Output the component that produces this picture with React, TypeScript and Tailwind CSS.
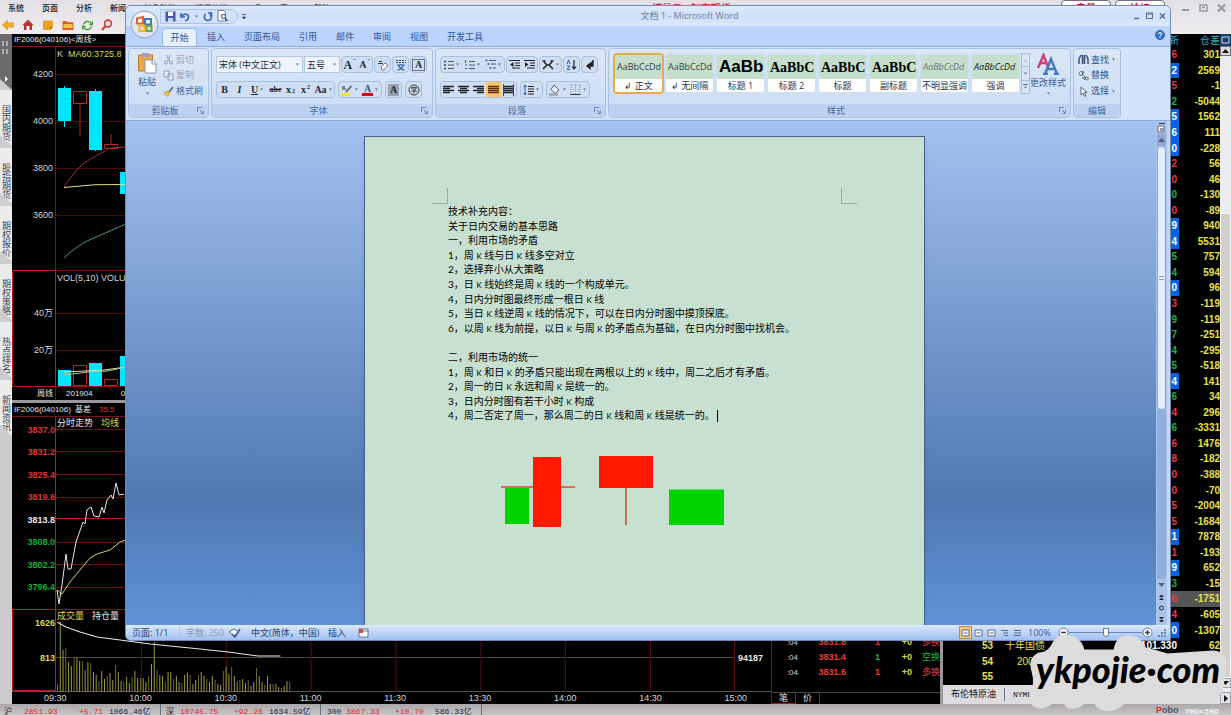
import type { ReactNode } from 'react';
import { FiRefreshCw } from 'react-icons/fi';

// --- Data ---
const menus = ['系统', '页面', '分析', '新闻'];
const sideTabs = ['国内期货', '股指期货', '期权报价', '期权策略', '热点排名', '新闻资讯'];
const weeklyAxis = ['4200', '4000', '3800', '3600'];
const times = ['09:30', '10:00', '10:30', '11:00', '11:30', '13:30', '14:00', '14:30', '15:00'];

const intradayAxis = [
  { value: '3837.0', color: 'text-[#e03030]' },
  { value: '3831.2', color: 'text-[#e03030]' },
  { value: '3825.4', color: 'text-[#e03030]' },
  { value: '3819.6', color: 'text-[#e03030]' },
  { value: '3813.8', color: 'text-gray-200' },
  { value: '3808.0', color: 'text-[#10b030]' },
  { value: '3802.2', color: 'text-[#10b030]' },
  { value: '3796.4', color: 'text-[#10b030]' },
];

const volumeBars = [
  8, 70, 42, 44, 30, 26, 34, 34, 31, 31, 22, 30, 29, 20, 17, 11, 21, 13, 16, 19, 12, 27, 20, 11, 10,
  15, 9, 15, 21, 14, 14, 14, 10, 16, 28, 50, 22, 17, 16, 10, 20, 20, 13, 16, 10, 9, 17, 19, 17, 8,
  12, 17, 20, 16, 13, 10, 16, 12, 8, 7, 21, 25, 18, 25, 16, 10, 12, 13, 9, 12, 6, 10, 24, 16, 10, 7,
  16, 8, 8, 8, 5, 4, 6, 11, 10,
];

// last digit, tone (r = up, g = down, b = flashing), position change
const quotes: [string, string, string][] = [
  ['6', 'r', '301'], ['2', 'b', '2569'], ['5', 'r', '-1'], ['2', 'g', '-5044'], ['5', 'b', '1562'],
  ['6', 'b', '111'], ['0', 'b', '-228'], ['2', 'r', '56'], ['0', 'r', '46'], ['0', 'g', '-130'],
  ['0', 'r', '-89'], ['9', 'b', '940'], ['4', 'b', '5531'], ['5', 'g', '757'], ['4', 'g', '594'],
  ['0', 'b', '96'], ['3', 'r', '-119'], ['9', 'g', '-119'], ['7', 'g', '-251'], ['4', 'g', '-295'],
  ['5', 'g', '-518'], ['4', 'b', '141'], ['6', 'g', '34'], ['4', 'r', '296'], ['6', 'g', '-3331'],
  ['6', 'r', '1476'], ['8', 'r', '-182'], ['0', 'r', '-388'], ['0', 'r', '-70'], ['5', 'r', '-2004'],
  ['5', 'r', '-1684'], ['1', 'b', '7878'], ['1', 'r', '-193'], ['9', 'b', '652'], ['3', 'g', '-15'],
  ['6', 'r', '-1751'], ['4', 'r', '-605'], ['0', 'b', '-1307'],
];

const tone: Record<string, string> = {
  r: 'text-[#e83c3c]',
  g: 'text-[#20b040]',
  b: 'bg-[#0a62e0] text-white',
};

const ribbonTabs = ['插入', '页面布局', '引用', '邮件', '审阅', '视图', '开发工具'];

const docStyles = [
  { name: '↲ 正文', sample: 'AaBbCcDd', cls: 'text-[9px] text-gray-700' },
  { name: '↲ 无间隔', sample: 'AaBbCcDd', cls: 'text-[9px] text-gray-700' },
  { name: '标题 1', sample: 'AaBb', cls: "font-['Liberation_Sans'] text-[17px] font-bold text-black" },
  { name: '标题 2', sample: 'AaBbC', cls: "font-['Liberation_Serif'] text-[14px] font-bold text-black" },
  { name: '标题', sample: 'AaBbC', cls: "font-['Liberation_Serif'] text-[14px] font-bold text-black" },
  { name: '副标题', sample: 'AaBbC', cls: "font-['Liberation_Serif'] text-[14px] font-bold text-black" },
  { name: '不明显强调', sample: 'AaBbCcDd', cls: 'text-[9px] italic text-gray-500' },
  { name: '强调', sample: 'AaBbCcDd', cls: 'text-[9px] italic text-gray-900' },
];

const docLines = [
  '技术补充内容：',
  '关于日内交易的基本思路',
  '一，利用市场的矛盾',
  '1，周 K 线与日 K 线多空对立',
  '2，选择弃小从大策略',
  '3，日 K 线始终是周 K 线的一个构成单元。',
  '4，日内分时图最终形成一根日 K 线',
  '5，当日 K 线逆周 K 线的情况下，可以在日内分时图中摸顶探底。',
  '6，以周 K 线为前提，以日 K 与周 K 的矛盾点为基础，在日内分时图中找机会。',
  '',
  '二，利用市场的统一',
  '1，周 K 和日 K 的矛盾只能出现在两根以上的 K 线中，周二之后才有矛盾。',
  '2，周一的日 K 永远和周 K 是统一的。',
  '3，日内分时图有若干小时 K 构成',
  '4，周二否定了周一，那么周二的日 K 线和周 K 线是统一的。',
];

// --- Small shared parts ---
const Glyph = ({ w = 12, h = 12, children }: { w?: number; h?: number; children: ReactNode }) => (
  <svg width={w} height={h} viewBox={`0 0 ${w} ${h}`} fill="none" aria-hidden="true" className="shrink-0">
    {children}
  </svg>
);

const Caret = () => (
  <Glyph w={5} h={3}>
    <path d="M1 0.5h3L2.5 2.5z" fill="#5a6c8c" />
  </Glyph>
);

const Tool = ({ label, wide, on, children }: { label: string; wide?: boolean; on?: boolean; children: ReactNode }) => (
  <button
    aria-label={label}
    className={`flex h-[15px] items-center justify-center gap-px ${wide ? 'w-[21px]' : 'w-[15px]'} ${on ? 'bg-[#fbc56c]' : ''}`}
  >
    {children}
    {wide && <Caret />}
  </button>
);

const ToolSet = ({ children }: { children: ReactNode }) => (
  <div className="flex h-[17px] items-center rounded-sm border border-[#a9bfe0] bg-[#cfdef2]">{children}</div>
);

const Group = ({ title, width, launcher, children }: { title: string; width: string; launcher?: boolean; children: ReactNode }) => (
  <section className={`flex h-[70px] shrink-0 flex-col rounded-sm border border-[#a8c0e2] bg-gradient-to-b from-[#dbe7f6] to-[#cbdcf3] ${width}`}>
    <div className="flex-1 px-1 pt-[3px]">{children}</div>
    <div className="flex h-[13px] items-center bg-[#bdd2f0] px-1 text-[#4668a0]">
      <span className="flex-1 text-center">{title}</span>
      {launcher && (
        <Glyph w={7} h={7}>
          <path d="M0.5 5V0.5H5M3 3l3 3M6.5 3.5v3h-3" stroke="#6c88b4" />
        </Glyph>
      )}
    </div>
  </section>
);

// x positions of the lines in a paragraph icon, one pair for each row
const Lines = ({ rows, color = '#222' }: { rows: number[][]; color?: string }) => (
  <>
    {rows.map(([a, b], i) => (
      <path key={i} d={`M${a} ${2.5 + i * 2}H${b}`} stroke={color} strokeWidth="1.3" />
    ))}
  </>
);

// --- Trading terminal ---
const TerminalHeader = () => (
  <header className="h-[34px] shrink-0 bg-gradient-to-b from-[#e2e0e4] to-[#efedf0] text-[8px] text-gray-900">
    <div className="flex h-4 items-center">
      <nav className="flex pl-2">
        {menus.map((m) => (
          <button key={m} className="w-[34px] text-left font-medium">{m}</button>
        ))}
        <button className="w-[51px] text-left">特色功能</button>
        <button className="w-[51px] text-left">期权分析</button>
        <button className="w-[34px] text-left">工具</button>
        <button className="w-[34px] text-left">窗口</button>
        <button className="w-[34px] text-left">帮助</button>
      </nav>
      <p className="flex-1 pl-[304px] text-[10px] text-red-600">博易云 - 赵交期货</p>
      <div className="flex gap-1 pr-4 text-[10px] font-medium text-red-700">
        <button className="h-4 w-[50px] rounded border border-gray-500 bg-white leading-3">电量</button>
        <button className="h-4 w-[50px] rounded border border-gray-500 bg-white leading-3">论坛</button>
      </div>
      <div className="flex gap-2 pr-1">
        <Glyph w={10} h={8}><path d="M1 6h7" stroke="#999" strokeWidth="2" /></Glyph>
        <Glyph w={10} h={8}><path d="M1 1h7v6H1zM3 3.5h3" stroke="#999" strokeWidth="1.4" /></Glyph>
        <Glyph w={10} h={8}><path d="M1 0.5l7 7M8 0.5l-7 7" stroke="#999" strokeWidth="2" /></Glyph>
      </div>
    </div>
    <div className="flex h-[18px] items-center gap-2 pl-[2px]">
      <button aria-label="后退"><Glyph><path d="M0.5 6l5-5v3h6v4h-6v3z" fill="#f6b21c" stroke="#c98a10" strokeWidth="0.6" /></Glyph></button>
      <button aria-label="主页"><Glyph><path d="M0.5 6L6 0.8 11.5 6l-1.5 0.4V11H2V6.4z" fill="#b33430" /><path d="M4.5 7h3v4h-3z" fill="#fff" /></Glyph></button>
      <button aria-label="资料"><Glyph><path d="M1 1.5h10v6.5l-3 3H1z" fill="#eda21d" /><path d="M8 11V8h3z" fill="#a96a10" /></Glyph></button>
      <button aria-label="文件夹"><Glyph><path d="M0.5 2h4l1 1.2h6V11H0.5z" fill="#d8601c" /><path d="M1.5 5h9v4h-9z" fill="#f6c14a" /></Glyph></button>
      <button aria-label="刷新" className="text-[#4b9a35]"><FiRefreshCw size={11} strokeWidth={3} /></button>
      <button aria-label="查找"><Glyph><circle cx="7" cy="4.5" r="3.4" fill="#fbe2e0" stroke="#cf3a30" strokeWidth="1.6" /><path d="M4.5 7L1 11" stroke="#cf3a30" strokeWidth="2" /></Glyph></button>
    </div>
  </header>
);

const SideTabs = () => (
  <aside className="flex w-3 shrink-0 flex-col bg-[#cfcccf]">
    <button aria-label="展开" className="h-14 shrink-0">
      <Glyph w={12} h={56}>
        <path d="M0 0h12v56L0 45z" fill="#6b6b6d" />
        <path d="M3 7v5M7 7v5M3 15v5M7 15v5" stroke="#ccc" strokeWidth="1.4" />
        <path d="M5 42l3 3-3 3z" fill="#fff" />
      </Glyph>
    </button>
    {sideTabs.map((t) => (
      <button
        key={t}
        className="mb-[2px] flex h-14 w-3 shrink-0 justify-center bg-[#ecebec] pt-[9px] text-[9px] leading-3 text-gray-700 [clip-path:polygon(0_0,100%_0,100%_100%,0_80%)] [writing-mode:vertical-rl]"
      >
        {t}
      </button>
    ))}
  </aside>
);

const WeeklyChart = () => (
  <section className="flex h-[366px] shrink-0 flex-col">
    <h2 className="h-[13px] border-b border-[#7d1414] pl-[2px] text-[8px] leading-3 text-gray-200">IF2006(040106)&lt;周线&gt;</h2>
    <div className="flex h-[223px]">
      <div className="w-11 border-r border-[#7d1414] pt-1 pr-[2px] text-right text-[9px] text-gray-300">
        {weeklyAxis.map((v) => (
          <div key={v} className="h-[47px] leading-[47px]">{v}</div>
        ))}
      </div>
      <div className="flex-1 text-[9px] leading-[14px]">
        <div className="flex h-[14px] gap-[5px] pl-[1px]">
          <span className="text-gray-300">K</span>
          <span className="text-[#d8d84a]">MA60:3725.8</span>
        </div>
        <svg width="70" height="209" viewBox="56 61 70 209" fill="none">
          <path d="M56 74.500h70M56 121.500h70M56 168.500h70M56 215.500h70" stroke="#4a0c0c" />
          <path d="M64.500 86v41M95.500 89v62" stroke="#00e0ff" />
          <path d="M58 88h13v33H58zM89 91h13v59H89zM120 172h6v22h-6z" fill="#00e5ff" />
          <path d="M73.500 91.500h13v12h-13zM80 104v32M104.500 144.500h13v4h-13zM111 134v10" stroke="#b02a2a" />
          <path d="M64 187q14-22 28-29t18-10l16-1" stroke="#9a3040" />
          <path d="M64 187.500q30-4 62-3" stroke="#e6e08a" />
          <path d="M64 258q14-14 32-21l30-13" stroke="#4f8f8c" />
        </svg>
      </div>
    </div>
    <div className="flex h-[117px]">
      <div className="w-11 border border-[#c01818] pr-[2px] text-right text-[9px] text-gray-300">
        <div className="mt-6 h-[37px] leading-[37px]">40万</div>
        <div className="h-[37px] leading-[37px]">20万</div>
      </div>
      <div className="flex-1 border-y border-[#7d1414] text-[9px] leading-[14px] text-gray-300">
        <div className="h-[14px] pl-[1px]">VOL(5,10) VOLU</div>
        <svg width="70" height="101" viewBox="56 285 70 101" fill="none">
          <path d="M56 313.500h70M56 350.500h70" stroke="#4a0c0c" />
          <path d="M58 370h13v16H58zM89 363h13v23H89zM120 356h6v30h-6z" fill="#00e5ff" />
          <path d="M73.500 365.500h13v20h-13zM104.500 379.500h13v6h-13z" stroke="#b02a2a" />
          <path d="M64 372l20-1 20-1 22-3" stroke="#e6e08a" />
          <path d="M64 375l24-3 20-1 18-4" stroke="#9ec8b0" />
        </svg>
      </div>
    </div>
    <div className="flex h-[13px] text-[8px] leading-[13px] text-gray-200">
      <span className="w-11 border-r border-[#7d1414] pr-[2px] text-right">周线</span>
      <span className="pl-[10px]">201904</span>
      <span className="pl-7">07</span>
    </div>
  </section>
);

const IntradayChart = () => (
  <section className="flex min-h-0 flex-1 flex-col border-t-[3px] border-[#9a989c] bg-black">
    <h2 className="flex h-[14px] gap-1 border-b border-[#7d1414] pl-[2px] text-[8px] leading-[14px] text-gray-200">
      <span>IF2006(040106)</span>
      <span>基差</span>
      <span className="pl-1 text-[#e03030]">35.5</span>
    </h2>
    <div className="flex h-[192px]">
      <div className="flex w-11 flex-col justify-between border-r border-[#c01818] pt-[6px] pb-[15px] text-right text-[9px] leading-[14px] font-bold">
        {intradayAxis.map((a) => (
          <span key={a.value} className={a.color}>{a.value}</span>
        ))}
      </div>
      <div className="flex-1 text-[9px] leading-3">
        <div className="flex h-3 gap-2 pl-[1px]">
          <span className="text-gray-200">分时走势</span>
          <span className="text-[#d8d84a]">均线</span>
        </div>
        <svg width="70" height="180" viewBox="56 429 70 180" fill="none">
          <path d="M56 429.500h70M56 451.500h70M56 474.500h70M56 497.500h70M56 542.500h70M56 564.500h70M56 587.500h70" stroke="#6a1010" />
          <path d="M56 518.500h70" stroke="#c01818" />
          <path d="M57 590l5 4 8-12 10-12 10-12 7-4 13-4 10-8 6-2" stroke="#cfcf6a" />
          <path
            d="M57 590l2 14 3-19 4-31 2 15h3l5-27 7-20 2 2 2-14 4-3 3 9 5 1 3-10 2 6 3-13 4-5 2 4 3-16 3 12 5-1"
            stroke="#e8e8e8"
          />
        </svg>
      </div>
    </div>
    <div className="flex h-[83px] border-b border-[#555]">
      <div className="flex w-11 flex-col border border-[#c01818] pt-[6px] text-right text-[9px] leading-[14px] font-bold text-[#d8d84a]">
        <span>1626</span>
        <span className="pt-[21px]">813</span>
      </div>
      <div className="flex-1 border-t border-[#7d1414] text-[9px] leading-3">
        <div className="flex h-3 gap-2 pl-[1px]">
          <span className="text-[#d8d84a]">成交量</span>
          <span className="text-gray-200">持仓量</span>
        </div>
        <svg width="100%" height="70" viewBox="0 0 678 70" preserveAspectRatio="none" fill="none">
          <path d="M0 35.500h678" stroke="#4a4a4a" />
          <path d="M85.500 0v70M170.500 0v70M254.500 0v70M339.500 0v70M424.500 0v70M508.500 0v70M593.500 0v70M677.500 0v70" stroke="#5c1010" />
          {volumeBars.map((v, i) => (
            <path key={i} d={`M${1.5 + i * 2.76} 70v-${v}`} stroke={i % 3 ? '#a09a48' : '#6f6a28'} />
          ))}
          <path d="M1 0l9 5 14 5 17 5 23 3 30 4 40 4 38 4 30 4 22 0" stroke="#e8e8e8" />
        </svg>
      </div>
      <div className="w-9 pt-[42px] pl-[3px] text-[9px] leading-[14px] font-bold text-gray-200">94187</div>
    </div>
    <div className="flex justify-between pr-6 pl-8 text-[9px] leading-3 text-gray-300">
      {times.map((t) => (
        <span key={t}>{t}</span>
      ))}
    </div>
  </section>
);

const ticks = [
  { price: '3831.8', dir: '多换', cls: 'text-[#e83c3c]' },
  { price: '3831.4', dir: '空换', cls: 'text-[#20b040]' },
  { price: '3831.6', dir: '多换', cls: 'text-[#e83c3c]' },
];

const TickPanel = () => (
  <section className="flex w-[169px] shrink-0 flex-col justify-end border-l border-[#7d1414]">
    <table className="mb-3 w-full table-fixed text-[9px] font-bold">
      <tbody>
        {ticks.map((t) => (
          <tr key={t.price} className="h-[15px]">
            <td className="w-[26px] text-right text-[8px] font-normal text-gray-300">:04</td>
            <td className="w-12 text-right text-[#e83c3c]">{t.price}</td>
            <td className={`w-[34px] text-right ${t.cls}`}>1</td>
            <td className="w-8 text-right text-[#d8d84a]">+0</td>
            <td className={`text-right font-normal ${t.cls}`}>{t.dir}</td>
          </tr>
        ))}
      </tbody>
    </table>
    <div className="flex h-3 border-t border-[#444] text-[9px] leading-[11px] text-gray-200">
      <button className="w-6 border-r border-b border-[#a01818]">笔</button>
      <button className="w-6 border-r border-[#a01818]">价</button>
    </div>
  </section>
);

const QuotePanel = () => (
  <section className="flex w-[280px] shrink-0 flex-col border-l-[3px] border-[#9a989c]">
    <table className="h-[651px] w-full text-[10px] leading-[13px] font-bold text-[#e6e04a]">
      <thead>
        <tr className="text-[#2fb0b8]">
          <th className="w-[50px]" />
          <th />
          <th className="w-[60px] text-right font-normal">新</th>
          <th className="w-[41px] text-right font-normal">仓差</th>
        </tr>
      </thead>
      <tbody>
        {quotes.map(([digit, t, diff], i) => (
          <tr key={i} className={diff === '-1751' ? 'bg-[#555]' : ''}>
            <td />
            <td />
            <td className={`pr-[2px] text-right ${tone[t]}`}>{digit}</td>
            <td className="text-right">{diff}</td>
          </tr>
        ))}
        <tr>
          <td className="text-right">53</td>
          <td className="pl-3 font-normal">十年国债</td>
          <td className="pr-[2px] text-right text-white">101.330</td>
          <td className="text-right">62</td>
        </tr>
        <tr>
          <td className="text-right">54</td>
          <td className="pl-6 font-normal">2009</td>
          <td />
          <td />
        </tr>
        <tr>
          <td className="text-right">55</td>
          <td />
          <td />
          <td />
        </tr>
      </tbody>
    </table>
    <div className="flex flex-1 items-center bg-[#dedcde] pl-2 text-[9px] text-gray-900">
      <button className="border-r border-gray-500 pr-2">布伦特原油</button>
      <button className="px-2 font-['Liberation_Mono'] text-[8px]">NYMEX原油</button>
    </div>
  </section>
);

const TerminalScrollbar = () => (
  <div className="flex w-[11px] shrink-0 flex-col bg-[#ecebed]">
    <div className="flex h-3 items-center justify-center bg-[#1c3f66]">
      <Glyph w={9} h={8}><path d="M1 1h7v6H1z" stroke="#cde" /></Glyph>
    </div>
    <button aria-label="向上" className="flex h-[10px] items-center justify-center border border-gray-500 bg-[#dcdadc]">
      <Glyph w={7} h={4}><path d="M0 4l3.500-4L7 4z" fill="#111" /></Glyph>
    </button>
    <div className="flex-[158]" />
    <div className="flex-[464] border border-[#f8f6f4] bg-[#d3cfcb]" />
    <button aria-label="向下" className="flex h-[10px] items-center justify-center border border-gray-400 bg-[#e4e2e2]">
      <Glyph w={7} h={4}><path d="M0 0l3.500 4L7 0z" fill="#111" /></Glyph>
    </button>
    <button aria-label="向右" className="mt-1 flex h-3 items-center justify-center border border-gray-400 bg-[#e4e2e2]">
      <Glyph w={4} h={7}><path d="M0 0l4 3.500L0 7z" fill="#111" /></Glyph>
    </button>
  </div>
);

const TerminalStatus = () => (
  <footer className="flex h-[11px] shrink-0 overflow-hidden bg-gradient-to-b from-[#aaa6aa] to-[#c9c6c9] pl-1 font-['Liberation_Mono','Noto_Sans_CJK_SC'] text-[8px] leading-[15px] text-gray-800">
    <span className="w-5">沪</span>
    <span className="w-[55px] text-[#e02828]">2851.93</span>
    <span className="w-[30px] text-[#e02828]">+5.71</span>
    <span className="w-[51px]">1066.46亿</span>
    <span className="w-5 border-l border-gray-500 pl-[5px]">深</span>
    <span className="w-[54px] text-[#e02828]">10745.75</span>
    <span className="w-[35px] text-[#e02828]">+92.26</span>
    <span className="w-[51px]">1634.59亿</span>
    <span className="w-[26px] border-l border-gray-500 pl-[6px]">300</span>
    <span className="w-[49px] text-[#e02828]">3867.33</span>
    <span className="w-10 text-[#e02828]">+10.70</span>
    <span className="w-[47px] border-r border-gray-500">586.33亿</span>
    <span className="flex-1" />
    <strong className="w-[29px] font-['Liberation_Sans'] text-[9px] leading-[13px] text-gray-600">
      <span className="text-[#e02828]">P</span>obo
    </strong>
    <span className="w-[46px] font-bold text-gray-100">YHO&lt;IHO</span>
  </footer>
);

// --- Word window ---
const TitleBar = () => (
  <div className="flex h-5 items-center bg-gradient-to-b from-[#dfeafb] via-[#d0e0f9] to-[#dce9fd] pr-[3px] pl-[34px]">
    <div className="flex h-[15px] w-[78px] items-center gap-1 rounded-r-full border border-[#aac2e8] bg-[#d3e2fa] pl-1">
      <button aria-label="保存"><Glyph w={11} h={11}><path d="M0.500 0.500h10v10h-10z" fill="#4656a8" /><path d="M3 1h5v4H3z" fill="#fff" /><path d="M3 7h5v4H3z" fill="#cdd6f0" /></Glyph></button>
      <button aria-label="撤消"><Glyph w={10} h={11}><path d="M1 2v4h4M1.500 5.500C4 1.500 9 3 8.500 6.500 8.300 8.500 6.500 9.500 5 9.500" stroke="#3264b8" strokeWidth="1.600" /></Glyph></button>
      <Caret />
      <button aria-label="恢复"><Glyph w={10} h={11}><path d="M2.500 3C0 6 2 9.500 5 9.500S9.500 6 7 3.500M5 2h3.500v3.500" stroke="#3264b8" strokeWidth="1.600" /></Glyph></button>
      <button aria-label="打印预览"><Glyph w={11} h={12}><path d="M1 0.500h5.500l2 2V11H1z" fill="#fff" stroke="#6b7c9a" /><circle cx="6.500" cy="6.500" r="2.200" fill="#d7e6f8" stroke="#456" /><path d="M8 8l2.500 3" stroke="#456" strokeWidth="1.400" /></Glyph></button>
    </div>
    <Glyph w={9} h={7}><path d="M4 1.500h4M4.500 4h3L6 6z" stroke="#445" strokeWidth="0.800" fill="#445" /></Glyph>
    <h1 className="flex-1 text-center font-['Open_Sans','Noto_Sans_CJK_SC'] text-[9px] text-[#6b7fa5]">文档 1 - Microsoft Word</h1>
    <div className="flex gap-1">
      <button aria-label="最小化"><Glyph w={9} h={8}><path d="M2 6.500h5" stroke="#5a6c90" strokeWidth="1.500" /></Glyph></button>
      <button aria-label="最大化"><Glyph w={9} h={8}><path d="M1.500 1h6v5.500h-6zM1.500 2h6" stroke="#5a6c90" /></Glyph></button>
      <button aria-label="关闭"><Glyph w={9} h={8}><path d="M2 1.500l5 5M7 1.500l-5 5" stroke="#5a6c90" strokeWidth="1.500" /></Glyph></button>
    </div>
  </div>
);

const OfficeButton = () => (
  <button aria-label="Office 按钮" className="absolute top-1 left-1">
    <Glyph w={29} h={29}>
      <circle cx="14.500" cy="14.500" r="13.500" fill="#dfe4ee" stroke="#8da0c4" />
      <ellipse cx="14.500" cy="9" rx="10" ry="7" fill="#f6f8fc" />
      <path d="M7 8.500l6-1.500v6.500H7z" stroke="#e4602a" strokeWidth="2" />
      <path d="M15 9h6v5.500h-6z" stroke="#3f78c4" strokeWidth="2" />
      <path d="M9.500 15.500h5V21h-5z" stroke="#f0b020" strokeWidth="2" />
      <path d="M16.500 16h5v5h-5z" stroke="#69a83c" strokeWidth="2" />
    </Glyph>
  </button>
);

const RibbonTabs = () => (
  <nav className="flex h-5 items-end bg-[#bcd4fb] pr-[5px] pl-9 text-[#2a549c]">
    <button className="h-[18px] w-[35px] rounded-t border border-b-0 border-[#9db8e2] bg-[#e6f0fd]">开始</button>
    <div className="flex h-[18px] flex-1 gap-[19px] pl-[10px]">
      {ribbonTabs.map((t) => (
        <button key={t}>{t}</button>
      ))}
    </div>
    <button aria-label="帮助" className="pb-[6px]">
      <Glyph w={10} h={10}>
        <circle cx="5" cy="5" r="4.500" fill="#3b78cc" stroke="#2a5aa6" />
        <path d="M3.500 4Q3.500 2.500 5 2.500T6.500 4Q6.500 5 5 5.500M5 6.800v1" stroke="#fff" />
      </Glyph>
    </button>
  </nav>
);

const ClipboardGroup = () => (
  <Group title="剪贴板" width="w-[81px]" launcher>
    <div className="flex gap-[2px]">
      <button className="flex w-7 flex-col items-center text-[#3e5f98]">
        <Glyph w={20} h={22}>
          <path d="M1.500 3h14v16h-14z" fill="#e9a94b" stroke="#b97b28" />
          <path d="M5 1h7v4H5z" fill="#9aa4b6" />
          <path d="M8 8h7.500l3.500 3.500V21H8z" fill="#fff" stroke="#8797b5" />
          <path d="M15 8v4h4" stroke="#8797b5" />
        </Glyph>
        <span className="pt-[2px] leading-3">粘贴</span>
        <span className="pt-1"><Caret /></span>
      </button>
      <div className="flex flex-col whitespace-nowrap">
        <button className="flex h-[15px] items-center gap-[2px] text-[#9aa3b4]">
          <Glyph w={11} h={11}><path d="M3.500 1l3 6M7.500 1l-3 6" stroke="#929cb0" /><circle cx="3" cy="8.500" r="1.500" stroke="#929cb0" /><circle cx="8" cy="8.500" r="1.500" stroke="#929cb0" /></Glyph>
          剪切
        </button>
        <button className="flex h-4 items-center gap-[2px] text-[#9aa3b4]">
          <Glyph w={11} h={11}><path d="M1 1h5v6H1zM5 4h5v6H5z" fill="#e6eaf1" stroke="#929cb0" /></Glyph>
          复制
        </button>
        <button className="flex h-4 items-center gap-[2px] text-[#3e5f98]">
          <Glyph w={11} h={11}><path d="M10 1L6 6" stroke="#6a7690" strokeWidth="2" /><path d="M1 7l4-2 2 2-2.500 3.500z" fill="#f0c040" stroke="#b08820" strokeWidth="0.600" /></Glyph>
          格式刷
        </button>
      </div>
    </div>
  </Group>
);

const FontGroup = () => (
  <Group title="字体" width="w-[222px]" launcher>
    <div className="flex h-[25px] items-center gap-px font-['Liberation_Serif'] font-bold text-gray-800">
      <label className="flex h-[17px] w-[87px] items-center border border-[#b4c8e6] bg-[#eef4fd] pr-[2px] font-['Open_Sans','Noto_Sans_CJK_SC'] font-normal">
        <select aria-label="字体" className="w-full appearance-none pl-[2px]">
          <option>宋体 (中文正文)</option>
        </select>
        <Caret />
      </label>
      <label className="flex h-[17px] w-9 items-center border border-[#b4c8e6] bg-[#eef4fd] pr-[2px] font-['Noto_Sans_CJK_SC'] font-normal">
        <select aria-label="字号" className="w-full appearance-none pl-[2px]">
          <option>五号</option>
        </select>
        <Caret />
      </label>
      <ToolSet>
        <Tool label="增大字体"><span className="text-[12px]">A</span><sup className="text-[7px]">ˆ</sup></Tool>
        <Tool label="缩小字体"><span className="text-[10px]">A</span><sup className="text-[7px]">ˇ</sup></Tool>
      </ToolSet>
      <ToolSet>
        <Tool label="清除格式"><Glyph><path d="M4 8l4-4 3 2-4 5H5z" fill="#fff" stroke="#7d6f96" /><path d="M1 4.500h5M2 2.500h3" stroke="#333" /></Glyph></Tool>
      </ToolSet>
      <ToolSet>
        <Tool label="拼音指南"><Glyph><path d="M1 1.500h10M1 3.500h10" stroke="#444" strokeDasharray="2 1" /><path d="M2 6h8M6 5v1M3.500 6q1.500 4 6 5M8.500 6q-1.500 4-6 5" stroke="#2d5cac" strokeWidth="1.200" /></Glyph></Tool>
      </ToolSet>
      <ToolSet>
        <Tool label="字符边框"><span className="border border-gray-500 px-[2px] text-[10px] leading-[10px]">A</span></Tool>
      </ToolSet>
    </div>
    <div className="flex h-[25px] items-center gap-[3px] font-['Liberation_Serif'] text-[10px] font-bold text-gray-800">
      <ToolSet>
        <Tool label="加粗">B</Tool>
        <Tool label="倾斜"><i>I</i></Tool>
        <Tool label="下划线" wide><u>U</u></Tool>
        <Tool label="删除线"><s className="text-[8px]">abe</s></Tool>
        <Tool label="下标">x<sub className="text-[6px]">2</sub></Tool>
        <Tool label="上标">x<sup className="text-[6px]">2</sup></Tool>
        <Tool label="更改大小写" wide>Aa</Tool>
      </ToolSet>
      <ToolSet>
        <Tool label="突出显示" wide><Glyph><path d="M0 9h9v3H0z" fill="#f2e81c" /><path d="M5 8l5.500-6" stroke="#556" strokeWidth="1.600" /><path d="M1 5h4M1 3h3" stroke="#333" strokeWidth="1.200" /></Glyph></Tool>
        <Tool label="字体颜色" wide><span className="border-b-[3px] border-red-600 px-[2px] leading-[9px] text-[#37558c]">A</span></Tool>
      </ToolSet>
      <ToolSet>
        <Tool label="字符底纹"><span className="bg-gray-400 px-[2px] leading-3">A</span></Tool>
      </ToolSet>
      <ToolSet>
        <Tool label="带圈字符"><Glyph><circle cx="6" cy="6" r="5" stroke="#333" /><path d="M3.500 4.500V3.500h5v1M4 5h4L6 6.500V9.500M3 7.200h6" stroke="#333" strokeWidth="0.900" /></Glyph></Tool>
      </ToolSet>
    </div>
  </Group>
);

const ParagraphGroup = () => (
  <Group title="段落" width="w-[171px]" launcher>
    <div className="flex h-[25px] items-center gap-px">
      <ToolSet>
        <Tool label="项目符号" wide><Glyph w={11}><path d="M1 2.500h2M1 6h2M1 9.500h2" stroke="#345" strokeWidth="1.500" /><path d="M5 2.500h6M5 6h6M5 9.500h6" stroke="#556" /></Glyph></Tool>
        <Tool label="编号" wide><Glyph w={11}><path d="M1.500 1v3M1 6h2M1 9.500h2" stroke="#2d5cac" /><path d="M5 2.500h6M5 6h6M5 9.500h6" stroke="#556" /></Glyph></Tool>
        <Tool label="多级列表" wide><Glyph w={11}><path d="M0.500 1.500h2M2.500 5h2M4.500 9h2" stroke="#2d5cac" strokeWidth="1.500" /><path d="M4 1.500h7M6 5h5M8 9h3" stroke="#556" /></Glyph></Tool>
      </ToolSet>
      <ToolSet>
        <Tool label="减少缩进"><Glyph w={11}><path d="M0 1.500h11M6 4h5M6 6.500h5M3 9h8" stroke="#222" strokeWidth="1.200" /><path d="M4.500 3L1 5.500 4.500 8z" fill="#222" /></Glyph></Tool>
        <Tool label="增加缩进"><Glyph w={11}><path d="M0 1.500h11M6 4h5M6 6.500h5M3 9h8" stroke="#222" strokeWidth="1.200" /><path d="M1 3l3.500 2.500L1 8z" fill="#222" /></Glyph></Tool>
      </ToolSet>
      <ToolSet>
        <Tool label="中文版式" wide><Glyph w={12}><path d="M1 10l4-4 2 0 4 4M2 3l3 3M10 3L7 6M0.500 2h3M8.500 2h3" stroke="#222" strokeWidth="1.500" /></Glyph></Tool>
      </ToolSet>
      <ToolSet>
        <Tool label="排序"><Glyph w={11}><path d="M1 5l1.500-4L4 5M1 7h3L1 10.500h3" stroke="#2d5cac" /><path d="M8 1v9M6 7.500L8 10l2-2.500" stroke="#222" strokeWidth="1.200" /></Glyph></Tool>
      </ToolSet>
      <ToolSet>
        <Tool label="显示标记"><Glyph w={10}><path d="M8 1v6H3M5 4.500L2 7l3 2.500z" stroke="#222" strokeWidth="1.300" fill="#222" /></Glyph></Tool>
      </ToolSet>
    </div>
    <div className="flex h-[25px] items-center gap-[3px]">
      <ToolSet>
        <Tool label="左对齐"><Glyph w={11}><Lines rows={[[0, 11], [0, 7], [0, 11], [0, 7]]} /></Glyph></Tool>
        <Tool label="居中"><Glyph w={11}><Lines rows={[[0, 11], [2, 9], [0, 11], [2, 9]]} /></Glyph></Tool>
        <Tool label="右对齐"><Glyph w={11}><Lines rows={[[0, 11], [4, 11], [0, 11], [4, 11]]} /></Glyph></Tool>
        <Tool label="两端对齐" on><Glyph w={11}><Lines rows={[[0, 11], [0, 11], [0, 11], [0, 11]]} color="#5a2c08" /></Glyph></Tool>
        <Tool label="分散对齐"><Glyph w={11}><Lines rows={[[1, 10], [1, 10], [1, 10], [1, 10]]} /><path d="M0.500 0v12M10.500 0v12" stroke="#345" /></Glyph></Tool>
      </ToolSet>
      <ToolSet>
        <Tool label="行距" wide><Glyph w={11}><path d="M2 1v10M0.500 3L2 1l1.500 2M0.500 9L2 11l1.500-2" stroke="#2d5cac" /><path d="M5 2.500h6M5 5h6M5 7.500h6M5 10h6" stroke="#222" /></Glyph></Tool>
      </ToolSet>
      <ToolSet>
        <Tool label="底纹" wide><Glyph w={12}><path d="M5 1l5 5-4 3.500L2 5.500z" fill="#eef" stroke="#556" /><path d="M0 10.500h9" stroke="#999" strokeWidth="2" /></Glyph></Tool>
        <Tool label="边框" wide><Glyph w={11}><path d="M1 1v9M5.500 1v9M10 1v9M1 1h9M1 5.500h9" stroke="#8a98b0" strokeDasharray="1 1" /><path d="M0.500 10.500h10" stroke="#333" /></Glyph></Tool>
      </ToolSet>
    </div>
  </Group>
);

const StylesGroup = () => (
  <Group title="样式" width="w-[463px]" launcher>
    <div className="flex h-[43px] items-center">
      <div className="flex shrink-0">
        {docStyles.map((s, i) => (
          <button
            key={i}
            className={`flex h-[41px] w-[51px] shrink-0 flex-col overflow-hidden rounded-sm border-2 ${i === 0 ? 'border-[#e8ac48]' : 'border-[#d0dff3]'}`}
          >
            <span className={`flex h-6 w-full items-center overflow-hidden bg-[#c6dfca] pl-[2px] whitespace-nowrap ${s.cls}`}>{s.sample}</span>
            <span className="h-[13px] w-full bg-white leading-[13px] whitespace-nowrap text-[#28344e]">{s.name}</span>
          </button>
        ))}
      </div>
      <div className="flex h-[41px] w-[9px] shrink-0 flex-col border border-[#a9bfe0] bg-[#d8e5f7]">
        <button aria-label="上一行" className="flex flex-1 items-center justify-center border-b border-[#a9bfe0]"><Glyph w={5} h={3}><path d="M1 2.500h3L2.500 0.500z" fill="#aab" /></Glyph></button>
        <button aria-label="下一行" className="flex flex-1 items-center justify-center border-b border-[#a9bfe0]"><Caret /></button>
        <button aria-label="其他" className="flex flex-1 flex-col items-center justify-center"><span className="mb-px h-px w-[5px] bg-[#5a6c8c]" /><Caret /></button>
      </div>
      <button className="flex w-9 flex-col items-center text-[#3e5f98]">
        <svg width="22" height="22" viewBox="0 0 22 22" fill="none" strokeWidth="2.400">
          <path d="M1 15L6.500 2 11 14M3 10h6" stroke="#c8407c" />
          <path d="M8 21l6-15 6 15M10 16h8M6 21h5M17 21h5" stroke="#4a76bc" />
        </svg>
        <span className="pt-[2px] leading-3 whitespace-nowrap">更改样式</span>
        <span className="pt-[3px]"><Caret /></span>
      </button>
    </div>
  </Group>
);

const EditGroup = () => (
  <Group title="编辑" width="w-[48px]">
    <div className="flex flex-col text-[#2f5090]">
      <button className="flex h-[15px] items-center gap-[2px] whitespace-nowrap">
        <Glyph w={11} h={11}><path d="M1 10V5l2-4M4.500 10V1M6.500 10V1M10 10V5L8 1M4 5h3" stroke="#3a4f7c" strokeWidth="1.500" /></Glyph>
        查找<Caret />
      </button>
      <button className="flex h-4 items-center gap-[2px] whitespace-nowrap">
        <Glyph w={11} h={11}><circle cx="3" cy="3.500" r="2" stroke="#677" /><path d="M5 1v4.500M4 8h3M6 6l2 2-2 2" stroke="#356" /><circle cx="9" cy="8.500" r="1.400" stroke="#677" /></Glyph>
        替换
      </button>
      <button className="flex h-4 items-center gap-[2px] whitespace-nowrap">
        <Glyph w={11} h={11}><path d="M3 1v8l2-2 1.500 3.500 1.300-0.600L6.500 6.500H9z" fill="#fff" stroke="#567" /></Glyph>
        选择<Caret />
      </button>
    </div>
  </Group>
);

const Sketch = () => (
  <svg width="230" height="80" viewBox="500 450 230 80" className="mt-[26px] ml-[52px]" role="img" aria-label="K线示意">
    <path d="M501 488h74" stroke="#e8402c" strokeWidth="1.500" />
    <path d="M505 489h24v36h-24z" fill="#00d400" />
    <path d="M533 458h28v70h-28z" fill="#ff1a00" />
    <path d="M626 489v37" stroke="#b05038" strokeWidth="1.500" />
    <path d="M599 457h54v32h-54z" fill="#ff1a00" />
    <path d="M669 490.500h55v35.500h-55z" fill="#00d400" />
  </svg>
);

// Latin letters sit a little smaller than the Chinese text around them
const DocLine = ({ text }: { text: string }) => (
  <>
    {text.split('K').map((part, i) => (
      <span key={i} className="whitespace-pre">
        {i > 0 && <span className="text-[8px]">K</span>}
        {part}
      </span>
    ))}
  </>
);

const Workspace = () => (
  <div className="flex min-h-0 flex-1 overflow-hidden bg-gradient-to-b from-[#a4c2ef] from-0% via-[#5079b3] via-75% to-[#6093d6] pl-[3px]">
    <div className="flex min-w-0 flex-1 justify-center overflow-hidden pt-[15px] pl-1">
      <article className="h-[1000px] w-[561px] shrink-0 border border-[#44618c] bg-[#c8e0d0] text-black shadow-md">
        <div className="flex h-[67px] items-end justify-between px-[67px]">
          <span className="h-4 w-4 border-r border-b border-[#9aaea2]" />
          <span className="h-4 w-4 border-b border-l border-[#9aaea2]" />
        </div>
        <div className="grid h-[219px] auto-rows-fr pl-[83px] font-['Lato','Noto_Sans_CJK_SC'] text-[10px] leading-[14px] whitespace-nowrap">
          {docLines.map((l, i) => (
            <p key={i} className={i === docLines.length - 1 ? 'flex items-center' : ''}>
              {i === docLines.length - 1 ? <span><DocLine text={l} /></span> : <DocLine text={l} />}
              {i === docLines.length - 1 && <span className="ml-[2px] h-3 w-px bg-black" />}
            </p>
          ))}
        </div>
        <div className="pl-[83px]">
          <Sketch />
        </div>
      </article>
    </div>
    <div className="flex w-[11px] shrink-0 flex-col items-center bg-[#a9c3ea] pt-[2px]">
      <span className="h-px w-[6px] bg-[#334]" />
      <Glyph w={9} h={10}><path d="M1 2h6v6H1z" fill="#fff" stroke="#667" /><path d="M3 4h4v3H3z" fill="#99a" /></Glyph>
      <span className="flex h-3 w-[9px] items-center justify-center bg-[#8fa9d2]"><Glyph w={7} h={4}><path d="M0 4l3.500-4L7 4z" fill="#557" /></Glyph></span>
      <div className="flex h-[264px] w-[9px] items-center justify-center rounded-sm border border-[#8ea6cc] bg-[#e3ecf9]">
        <span className="h-1 w-[5px] border-y border-[#99a]" />
      </div>
      <div className="w-[9px] flex-1 bg-[#8fafe0]" />
      <Glyph w={9} h={46}>
        <path d="M1 4h7L4.500 8z" fill="#567" />
        <path d="M2 18l2.500-2.500L7 18zM2 21l2.500-2.500L7 21zM2 38h5l-2.500 2.500zM2 41h5l-2.500 2.500z" fill="#223" />
        <circle cx="4.500" cy="29" r="2" stroke="#223" />
      </Glyph>
    </div>
    <div className="w-[3px] shrink-0 bg-[#c4d8f5]" />
  </div>
);

const StatusBar = () => (
  <div className="flex h-[15px] shrink-0 items-center bg-gradient-to-b from-[#dce9fb] to-[#9fc0f0] pr-[3px] pl-[6px] text-[#28406e]">
    <span className="w-12 border-r border-[#a9c3e8]">页面: 1/1</span>
    <span className="w-12 pl-[6px] whitespace-nowrap text-[#8f9aae]">字数: 250</span>
    <span className="w-[23px]"><Glyph w={13} h={12}><path d="M1 5l5-3 5 3-5 4z" fill="#fff" stroke="#667" /><path d="M4 7l3 3 5-8" stroke="#3a5a94" strokeWidth="1.500" /></Glyph></span>
    <span className="w-[77px] whitespace-nowrap">中文(简体，中国)</span>
    <span className="w-[30px]">插入</span>
    <Glyph w={11} h={10}><path d="M1 1h9v8H1zM1 3h9" fill="#fff" stroke="#678" /><path d="M1 1h4v4H1z" fill="#d0484a" /></Glyph>
    <span className="flex-1" />
    <div className="flex w-[64px] gap-[2px]">
      {['页面视图', '阅读版式', 'Web 版式', '大纲', '普通'].map((v, i) => (
        <button key={v} aria-label={v} className={`flex h-[11px] w-[11px] items-center justify-center ${i === 0 ? 'bg-[#fbc978] ring-1 ring-[#c08a3c]' : ''}`}>
          <Glyph w={9} h={8}>
            <path d={i < 3 ? 'M1 1h7v6H1z' : 'M1 1.500h7'} stroke="#556a8e" fill={i < 3 ? '#fff' : 'none'} />
            <path d={i === 3 ? 'M3 4h5M4 6.500h4' : i === 4 ? 'M1 4h7M1 6.500h7' : 'M2.500 4h4'} stroke="#556a8e" />
          </Glyph>
        </button>
      ))}
    </div>
    <span className="w-[34px] pl-[4px] font-['Open_Sans'] text-[9px] text-[#3c5a90]">100%</span>
    <button aria-label="缩小"><Glyph w={11} h={11}><circle cx="5.500" cy="5.500" r="4.500" fill="#fff" stroke="#5c78a8" /><path d="M3 5.500h5" stroke="#345" strokeWidth="1.500" /></Glyph></button>
    <label className="flex w-[73px] items-center">
      <input
        type="range"
        aria-label="显示比例"
        defaultValue={50}
        className="h-px w-full appearance-none bg-[#6c86b4] [&::-webkit-slider-thumb]:h-[9px] [&::-webkit-slider-thumb]:w-[6px] [&::-webkit-slider-thumb]:appearance-none [&::-webkit-slider-thumb]:rounded-b-full [&::-webkit-slider-thumb]:border [&::-webkit-slider-thumb]:border-[#5c78a8] [&::-webkit-slider-thumb]:bg-white"
      />
    </label>
    <button aria-label="放大" className="mr-1"><Glyph w={11} h={11}><circle cx="5.500" cy="5.500" r="4.500" fill="#fff" stroke="#5c78a8" /><path d="M3 5.500h5M5.500 3v5" stroke="#345" strokeWidth="1.500" /></Glyph></button>
    <Glyph w={10} h={10}><path d="M7 2h2M4 5h2M7 5h2M1 8h2M4 8h2M7 8h2" stroke="#6c86b4" strokeWidth="2" /></Glyph>
  </div>
);

const WordWindow = () => (
  <main className="absolute top-[5px] right-[60px] bottom-[74px] left-[125px] flex flex-col overflow-hidden rounded-t-md rounded-bl-md border border-[#7089b5] bg-[#bcd4fb] font-['Open_Sans','Noto_Sans_CJK_SC'] text-[9px]">
    <TitleBar />
    <RibbonTabs />
    <div className="flex h-[75px] shrink-0 gap-[2px] border-y border-[#8faadb] bg-[#d3e3fa] px-[2px] pt-px">
      <ClipboardGroup />
      <FontGroup />
      <ParagraphGroup />
      <StylesGroup />
      <EditGroup />
    </div>
    <Workspace />
    <StatusBar />
    <OfficeButton />
  </main>
);

// Site logo stamped over the bottom right corner
const Watermark = () => (
  <svg width="204" height="88" viewBox="0 0 204 88" className="absolute right-0 bottom-0" role="img" aria-label="ykpojie.com">
    <path
      d="M12 27Q22 27 27 16 32 8 42 10 54 12 56 24L88 24Q90 8 104 10 114 12 118 22 128 24 140 28L186 25Q200 26 198 42L194 64Q190 70 180 70L112 70Q100 72 94 78 86 84 76 82 68 80 68 70L60 70Q54 82 42 80 36 76 38 70L28 70Q24 80 12 80 2 78 4 66 10 58 6 44 2 32 12 27z"
      fill="#dcdcdc"
      stroke="#dcdcdc"
      strokeWidth="3"
    />
    <text x="9" y="56" fontSize="36" fontStyle="italic" fontWeight="900" fontFamily="Lato, sans-serif" fill="#000">
      ykpojie·com
    </text>
  </svg>
);

const App = () => (
  <div className="relative flex h-screen flex-col overflow-hidden bg-[#cfcccf] font-['Open_Sans','Noto_Sans_CJK_SC',sans-serif]">
    <TerminalHeader />
    <div className="flex min-h-0 flex-1">
      <SideTabs />
      <div className="flex min-w-0 flex-1 bg-black font-['Liberation_Sans','Noto_Sans_CJK_SC']">
        <div className="flex min-w-0 flex-1 flex-col">
          <WeeklyChart />
          <IntradayChart />
        </div>
        <TickPanel />
        <QuotePanel />
      </div>
      <TerminalScrollbar />
    </div>
    <TerminalStatus />
    <WordWindow />
    <Watermark />
  </div>
);

export default App;
